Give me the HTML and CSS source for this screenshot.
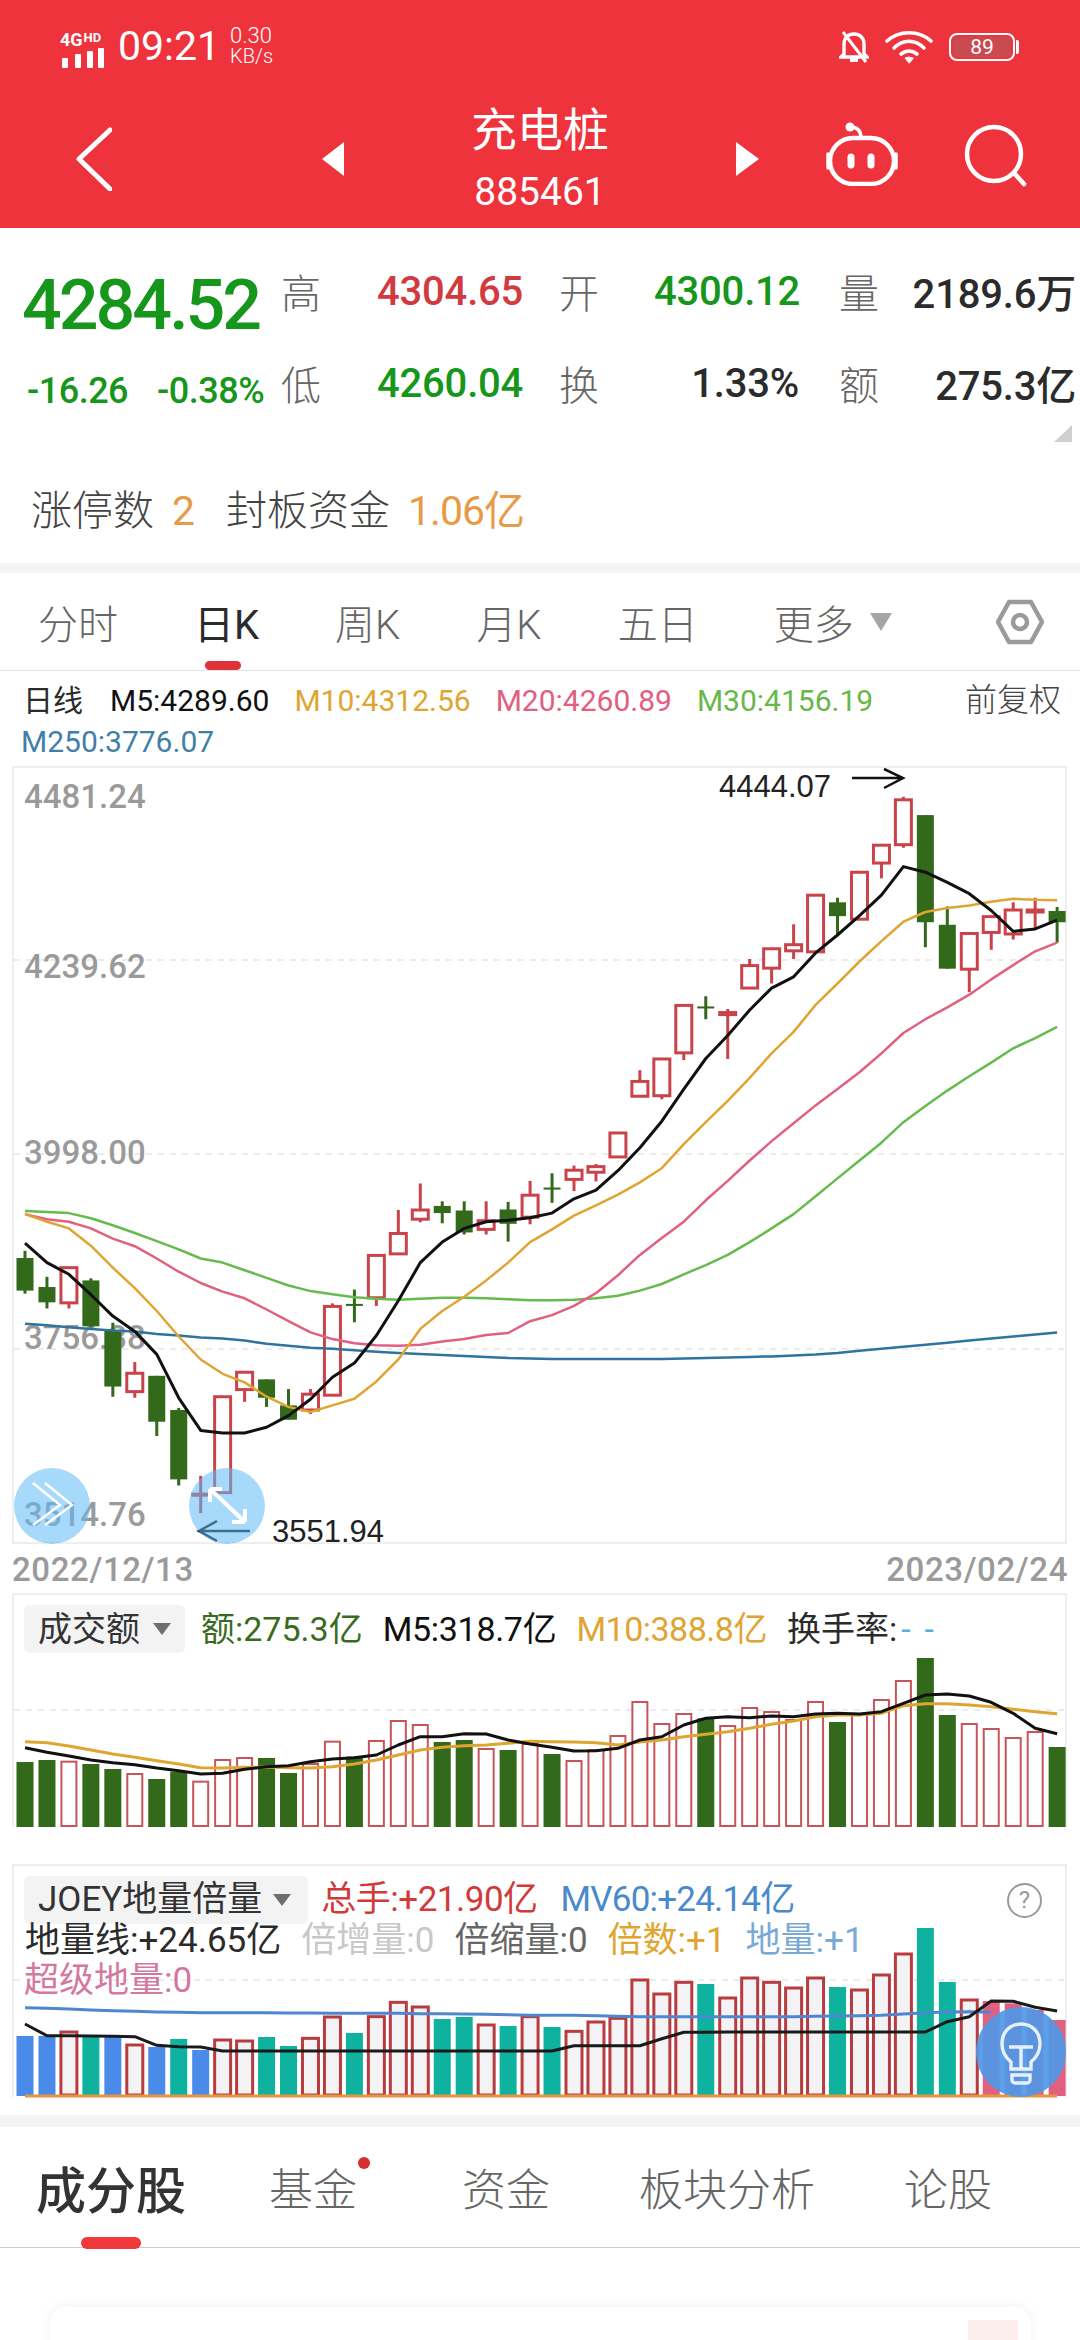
FILE: index.html
```html
<!DOCTYPE html>
<html lang="zh-CN">

<head>
    <meta http-equiv="Content-Type" content="text/html; charset=utf-8" />
    <title>充电桩</title>
    <link rel="stylesheet" href="styles.css">
</head>

<body>
    <header class="top">
        <div class="status">
            <div class="net">
                <div class="net-type">4G<span>HD</span></div>
                <svg class="signal" width="46" height="20" viewBox="0 0 46 20">
                    <rect x="2" y="10" width="6" height="10" rx="1" />
                    <rect x="15" y="6" width="6" height="14" rx="1" />
                    <rect x="27" y="3" width="6" height="17" rx="1" />
                    <rect x="38" y="0" width="6" height="20" rx="1" />
                </svg>
            </div>
            <div class="clock">09:21</div>
            <div class="speed"><span>0.30</span><span class="speed-unit">KB/s</span></div>
            <div class="sys">
                <svg class="bell" width="30" height="34" viewBox="0 0 30 34" fill="none" stroke="#fff" stroke-width="3.4">
                    <path d="M5 24V14C5 8 9 4 15 4s10 4 10 10v10l3 3H2z" />
                    <path d="M11 30h8" stroke-width="4" />
                    <path d="M4 2l23 30" stroke-width="3" />
                </svg>
                <svg class="wifi" width="48" height="34" viewBox="0 0 48 34" fill="none" stroke="#fff" stroke-width="3.6" stroke-linecap="round">
                    <path d="M2 11C14 0 34 0 46 11" />
                    <path d="M9 18C18 9 30 9 39 18" />
                    <path d="M16 24C21 20 27 20 32 24" />
                    <path d="M24 33l-4-5q4-2 8 0z" fill="#fff" stroke-width="1" />
                </svg>
                <div class="battery"><span>89</span></div>
            </div>
        </div>
        <nav class="nav">
            <div class="nav-left">
                <svg width="36" height="64" viewBox="0 0 36 64" fill="none" stroke="#fff" stroke-width="5" stroke-linecap="round" stroke-linejoin="round">
                    <path d="M34 3L3 32l31 30" />
                </svg>
                <span class="tri tri-left"></span>
            </div>
            <div class="nav-title">
                <div class="name">充电桩</div>
                <div class="code">885461</div>
            </div>
            <div class="nav-right">
                <span class="tri tri-right"></span>
                <svg class="robot" width="74" height="64" viewBox="0 0 74 64" fill="none" stroke="#fff" stroke-width="4.5">
                    <circle cx="25" cy="5" r="4.5" fill="#fff" stroke="none" />
                    <path d="M25 5q11 0 11 11" stroke-width="3.5" />
                    <rect x="5" y="16" width="64" height="46" rx="23" />
                    <path d="M3 32v14M71 32v14" stroke-width="3.5" stroke-linecap="round" />
                    <path d="M26 35v8M46 35v8" stroke-width="7" stroke-linecap="round" />
                </svg>
                <svg class="search" width="64" height="64" viewBox="0 0 64 64" fill="none" stroke="#fff" stroke-width="4.5">
                    <circle cx="30" cy="30" r="27" />
                    <path d="M50 49l10 11" stroke-linecap="round" />
                </svg>
            </div>
        </nav>
    </header>

    <section class="quote">
        <div class="quote-grid">
            <div class="price green">4284.52</div>
            <div class="qlabel">高</div>
            <div class="qval red">4304.65</div>
            <div class="qlabel">开</div>
            <div class="qval green">4300.12</div>
            <div class="qlabel">量</div>
            <div class="qval dark end">2189.6万</div>

            <div class="change green"><span>-16.26</span><span>-0.38%</span></div>
            <div class="qlabel">低</div>
            <div class="qval green">4260.04</div>
            <div class="qlabel">换</div>
            <div class="qval dark mid">1.33%</div>
            <div class="qlabel">额</div>
            <div class="qval dark end">275.3亿</div>
        </div>
        <div class="limit">
            <span>涨停数</span><span class="orange">2</span>
            <span class="limit-gap">封板资金</span><span class="orange">1.06亿</span>
        </div>
        <span class="corner"></span>
    </section>

    <div class="band"></div>

    <div class="period">
        <span>分时</span>
        <span class="active">日K</span>
        <span>周K</span>
        <span>月K</span>
        <span>五日</span>
        <span class="more">更多<i class="down"></i></span>
        <svg class="hex" width="48" height="46" viewBox="0 0 48 46" fill="none" stroke="#9a9a9a" stroke-width="4.5">
            <path d="M13 3h22l11 20-11 20H13L2 23z" stroke-linejoin="round" />
            <circle cx="24" cy="23" r="7" />
        </svg>
    </div>

    <div class="ma">
        <div class="ma-row">
            <span class="dark">日线</span>
            <span class="black">M5:4289.60</span>
            <span class="m10">M10:4312.56</span>
            <span class="m20">M20:4260.89</span>
            <span class="m30">M30:4156.19</span>
            <span class="fq">前复权</span>
        </div>
        <div class="ma-row"><span class="m250">M250:3776.07</span></div>
    </div>

    <div class="frame frame-main">
        <svg id="mainChart" class="plot" viewBox="14 768 1051 774"></svg>
        <div class="fab fab-left">
            <svg width="76" height="76" viewBox="0 0 76 76" fill="none" stroke="#fff" stroke-width="2.5">
                <path d="M19 15l27 22-27 20M31 15l27 22-27 20" />
            </svg>
        </div>
        <div class="fab fab-right">
            <svg width="76" height="76" viewBox="0 0 76 76" fill="none" stroke="#fff" stroke-width="4">
                <path d="M21 21L56 54M21 21h12M21 21v13M56 54H43M56 54V41" />
            </svg>
        </div>
    </div>

    <div class="dates"><span>2022/12/13</span><span>2023/02/24</span></div>

    <div class="frame frame-vol">
        <svg id="volChart" class="plot" viewBox="14 1595 1051 232"></svg>
        <div class="legend">
            <span class="tag">成交额<i class="tag-down"></i></span>
            <span class="l-green">额:275.3亿</span>
            <span class="black">M5:318.7亿</span>
            <span class="m10">M10:388.8亿</span>
            <span class="dark">换手率:<b class="dashes">--</b></span>
        </div>
    </div>

    <div class="frame frame-joey">
        <svg id="joeyChart" class="plot" viewBox="14 1866 1051 231"></svg>
        <div class="legend legend-joey">
            <span class="tag tag-wide">JOEY地量倍量<i class="tag-down"></i></span>
            <span class="l-red">总手:+21.90亿</span>
            <span class="l-blue">MV60:+24.14亿</span>
        </div>
        <div class="legend legend-line">
            <span class="dark">地量线:+24.65亿</span>
            <span class="l-muted">倍增量:0</span>
            <span class="l-grey">倍缩量:0</span>
            <span class="m10">倍数:+1</span>
            <span class="l-sky">地量:+1</span>
        </div>
        <div class="legend legend-line"><span class="l-pink">超级地量:0</span></div>
        <div class="help">?</div>
        <div class="fab-bulb">
            <svg width="90" height="90" viewBox="0 0 90 90" fill="none" stroke="#fff" stroke-width="3.4" stroke-opacity=".85">
                <path d="M35 62V55C29 50 26 44 26 37c0-12 8-20 19-20s19 8 19 20c0 7-3 13-9 18v7z" />
                <path d="M33 40h24M45 40v21" />
                <path d="M36 68h18v5a3 3 0 0 1-3 3H39a3 3 0 0 1-3-3z" />
            </svg>
        </div>
    </div>

    <div class="band band-low"></div>

    <div class="subtabs">
        <span class="active">成分股</span>
        <span class="has-dot">基金</span>
        <span>资金</span>
        <span>板块分析</span>
        <span>论股</span>
    </div>

    <div class="card"><span class="card-mark"></span></div>

    <script src="chart.js"></script>
</body>

</html>
```

FILE: styles.css
```css
html,
body {
    width: 1080px;
    height: 2340px;
    margin: 0;
    padding: 0;
    overflow: hidden;
    background-color: #fff;
    font-family: Roboto, "Noto Sans CJK SC", sans-serif;
    color: #333;
}

.top {
    height: 228px;
    background-color: #ee333d;
    color: #fff;
}

.status {
    display: flex;
    align-items: center;
    height: 90px;
    padding: 0 61px 0 60px;
    box-sizing: border-box;
}

.net {
    width: 48px;
    padding-top: 8px;
}

.net-type {
    font-size: 18px;
    font-weight: 700;
    line-height: 15px;
    white-space: nowrap;
}

.net-type span {
    font-size: 13px;
    margin-left: 1px;
    vertical-align: 4px;
}

.signal {
    display: block;
    margin-top: 1px;
    fill: #fff;
}

.clock {
    margin-left: 10px;
    font-size: 41px;
    line-height: 44px;
    padding-top: 2px;
}

.speed {
    display: flex;
    flex-direction: column;
    margin-left: 10px;
    font-size: 22px;
    font-weight: 300;
    line-height: 20px;
    padding-top: 2px;
}

.speed-unit {
    font-size: 20px;
}

.sys {
    display: flex;
    align-items: center;
    gap: 16px;
    margin-left: auto;
    padding-top: 4px;
}

.battery {
    display: flex;
    align-items: center;
    justify-content: center;
    width: 66px;
    height: 28px;
    border: 2px solid #fff;
    border-radius: 8px;
    box-sizing: border-box;
    margin-right: 4px;
    background-color: #c94a4f;
    box-shadow: inset 0 0 0 2px #ee333d;
    font-size: 21px;
    position: relative;
}

.battery::after {
    content: "";
    position: absolute;
    right: -6px;
    top: 5px;
    width: 3px;
    height: 14px;
    background-color: #fff;
    border-radius: 0 2px 2px 0;
}

.nav {
    display: grid;
    grid-template-columns: 344px 392px 344px;
    height: 138px;
}

.nav-left {
    display: flex;
    align-items: center;
    justify-content: space-between;
    padding-left: 76px;
}

.nav-right {
    display: flex;
    align-items: center;
}

.tri {
    display: block;
    width: 0;
    height: 0;
    border-top: 17px solid transparent;
    border-bottom: 17px solid transparent;
}

.tri-left {
    border-right: 22px solid #fff;
}

.tri-right {
    border-left: 23px solid #fff;
}

.robot {
    margin: -10px 0 0 66px;
}

.search {
    margin: -6px 0 0 65px;
}

.nav-title {
    text-align: center;
    padding-top: 10px;
}

.name {
    font-size: 46px;
    line-height: 60px;
}

.code {
    margin-top: 10px;
    font-size: 39px;
    line-height: 44px;
}

.quote {
    position: relative;
    height: 335px;
    box-sizing: border-box;
    padding: 17px 4px 0 25px;
}

.quote-grid {
    display: grid;
    grid-template-columns: 256px 96px 182px 95px 185px 41px 196px;
    grid-auto-rows: 92px;
    align-items: center;
}

.qlabel {
    font-size: 40px;
    color: #666;
    font-weight: 300;
}

.qval {
    font-size: 40px;
    font-weight: 500;
    letter-spacing: -0.2px;
}

.qval.mid {
    text-align: right;
    padding-right: 40px;
}

.qval.end {
    text-align: right;
}

.price {
    margin-left: -3px;
    font-size: 70px;
    font-weight: 500;
    letter-spacing: -3px;
    padding-top: 28px;
}

.change {
    display: flex;
    gap: 29px;
    padding-left: 2px;
    font-size: 36px;
    font-weight: 500;
    letter-spacing: -0.5px;
    padding-top: 16px;
}

.green {
    color: #16961a;
}

.red {
    color: #d13b40;
}

.dark {
    color: #2b2b2b;
}

.orange {
    color: #e89a45;
}

.limit {
    display: flex;
    align-items: center;
    gap: 18px;
    margin-top: 57px;
    padding-left: 6px;
    font-size: 41px;
    font-weight: 300;
    color: #444;
    line-height: 50px;
}

.limit-gap {
    margin-left: 14px;
}

.limit .orange {
    font-weight: 400;
    letter-spacing: -1px;
}

.corner {
    position: absolute;
    right: 8px;
    top: 197px;
    width: 0;
    height: 0;
    border-left: 18px solid transparent;
    border-bottom: 17px solid #cfcfcf;
}

.band {
    height: 10px;
    background-color: #f4f4f4;
}

.band-low {
    height: 12px;
    margin-top: 18px;
}

.period {
    display: flex;
    align-items: center;
    gap: 76px;
    height: 97px;
    padding: 0 0 0 38px;
    border-bottom: 1px solid #e4e4e4;
    position: relative;
    font-size: 40px;
    font-weight: 300;
    color: #666;
}

.period .active {
    color: #2b2b2b;
    font-weight: 400;
    position: relative;
}

.period .active::after {
    content: "";
    position: absolute;
    left: 11px;
    bottom: -19px;
    width: 36px;
    height: 9px;
    border-radius: 5px;
    background-color: #df3238;
}

.more {
    display: flex;
    align-items: center;
    gap: 16px;
}

.down {
    width: 0;
    height: 0;
    border-left: 11px solid transparent;
    border-right: 11px solid transparent;
    border-top: 18px solid #a5a5a5;
}

.hex {
    position: absolute;
    right: 36px;
    top: 26px;
}

.ma {
    height: 95px;
    box-sizing: border-box;
    padding: 9px 19px 0 23px;
    font-size: 30px;
    line-height: 41px;
}

.ma-row {
    display: flex;
    gap: 25px;
}

.ma-row:first-child .black {
    margin-left: 2px;
}

.ma-row:last-child {
    margin-left: -2px;
}

.black {
    color: #111;
}

.m10 {
    color: #dfa532;
}

.m20 {
    color: #e2607f;
}

.m30 {
    color: #67b84a;
}

.m250 {
    color: #3f7fa8;
}

.fq {
    margin-left: auto;
    color: #444;
    font-weight: 300;
    font-size: 32px;
}

.frame {
    position: relative;
    width: 1055px;
    margin-left: 12px;
    box-sizing: border-box;
    border: 2px solid #eeeeee;
}

.frame-main {
    height: 778px;
}

.frame-vol {
    height: 234px;
    border-bottom: 0;
}

.frame-joey {
    height: 233px;
    margin-top: 37px;
    border-bottom: 0;
}

.plot {
    position: absolute;
    left: 0;
    top: 0;
    width: 1051px;
    height: 100%;
    overflow: visible;
}

.axis {
    font-size: 33px;
    font-weight: 500;
    fill: #9a9a9a;
}

.extreme {
    font-family: "Liberation Sans", sans-serif;
    font-size: 31px;
    fill: #222;
}

.fab {
    position: absolute;
    top: 700px;
    width: 76px;
    height: 76px;
    border-radius: 50%;
    background-color: rgba(95, 186, 246, 0.55);
}

.fab-left {
    left: 0;
}

.fab-right {
    left: 175px;
}

.fab svg,
.fab-bulb svg {
    display: block;
}

.dates {
    display: flex;
    justify-content: space-between;
    width: 1056px;
    height: 49px;
    margin-left: 12px;
    font-size: 33px;
    line-height: 51px;
    letter-spacing: 0.6px;
    font-weight: 500;
    color: #9a9a9a;
}

.legend {
    position: relative;
    display: flex;
    align-items: center;
    gap: 20px;
    padding: 10px 0 0 10px;
    font-size: 34px;
    line-height: 48px;
}

.legend .l-green {
    margin-left: -4px;
}

.frame-vol .black {
    letter-spacing: -0.3px;
}

.frame-vol .m10 {
    letter-spacing: -0.5px;
}

.tag {
    display: flex;
    align-items: center;
    gap: 13px;
    padding: 0 14px;
    height: 48px;
    border-radius: 6px;
    background-color: #f3f3f3;
    color: #333;
}

.tag-down {
    width: 0;
    height: 0;
    border-left: 9px solid transparent;
    border-right: 9px solid transparent;
    border-top: 12px solid #6e6e6e;
}

.dashes {
    color: #5ab0dc;
    font-weight: 400;
    letter-spacing: 14px;
    margin-left: 4px;
}

.l-green {
    color: #386b1e;
}

.legend-joey {
    gap: 13px;
    font-size: 35px;
}

.tag-wide {
    gap: 11px;
    padding-right: 17px;
}

.legend-joey .l-red {
    letter-spacing: -0.5px;
}

.legend-joey .l-blue {
    margin-left: 10px;
    letter-spacing: -0.8px;
}

.legend-line {
    padding: 0 0 0 11px;
    gap: 20px;
    font-size: 35px;
    line-height: 40px;
}

.legend-joey + .legend-line {
    margin-top: -3px;
}

.l-red {
    color: #d23a3a;
}

.l-blue {
    color: #4a8acb;
}

.l-muted {
    color: #c8c8c8;
}

.l-grey {
    color: #666;
}

.l-sky {
    color: #7aa9d8;
}

.l-pink {
    color: #d4789f;
    margin-left: -1px;
}

.help {
    position: absolute;
    top: 17px;
    right: 23px;
    width: 31px;
    height: 31px;
    border: 2px solid #9a9a9a;
    border-radius: 50%;
    color: #9a9a9a;
    font-size: 24px;
    line-height: 31px;
    text-align: center;
}

.fab-bulb {
    position: absolute;
    left: 962px;
    top: 141px;
    width: 90px;
    height: 90px;
    border-radius: 50%;
    background-color: rgba(80, 152, 230, 0.92);
}

.subtabs {
    display: flex;
    align-items: center;
    gap: 89px;
    height: 120px;
    padding-left: 36px;
    border-bottom: 1px solid #cccccc;
    font-size: 44px;
    font-weight: 300;
    color: #666;
}

.subtabs span {
    position: relative;
}

.subtabs .active {
    font-size: 50px;
    font-weight: 500;
    color: #333;
}

.subtabs .active::after {
    content: "";
    position: absolute;
    left: 45px;
    bottom: -26px;
    width: 60px;
    height: 12px;
    border-radius: 6px;
    background-color: #f0393a;
}

.subtabs .has-dot {
    margin: 0 16px 0 -6px;
}

.has-dot::after {
    content: "";
    position: absolute;
    right: -13px;
    top: 2px;
    width: 12px;
    height: 12px;
    border-radius: 50%;
    background-color: #d62d30;
}

.card {
    position: relative;
    width: 981px;
    height: 120px;
    margin: 59px 0 0 50px;
    border-radius: 16px;
    box-shadow: 0 0 14px rgba(0, 0, 0, 0.06);
}

.card-mark {
    position: absolute;
    top: 13px;
    right: 13px;
    width: 50px;
    height: 50px;
    background-color: #fdeeee;
}
```

FILE: chart.js
```js
// candle data is [high, bodyTop, bodyBottom, low, up]
const candles = [
    [962, 976, 1040, 1046, 0], [1013, 1033, 1063, 1075, 0], [995, 995, 1064, 1075, 1], [1016, 1020, 1110, 1112, 0],
    [1103, 1118, 1228, 1248, 0], [1180, 1202, 1238, 1250, 1], [1207, 1207, 1297, 1325, 0], [1270, 1274, 1410, 1422, 0],
    [1403, 1439, 1441, 1476, 1], [1248, 1248, 1436, 1436, 1], [1200, 1200, 1234, 1258, 1], [1214, 1214, 1250, 1268, 0],
    [1233, 1265, 1293, 1293, 0], [1233, 1243, 1274, 1282, 1], [1065, 1071, 1245, 1245, 1], [1038, 1066, 1070, 1102, 0],
    [971, 971, 1054, 1070, 1], [882, 928, 968, 968, 1], [830, 882, 900, 906, 1], [865, 874, 888, 908, 0],
    [865, 883, 926, 930, 0], [865, 903, 920, 930, 1], [866, 881, 909, 944, 0], [825, 853, 896, 910, 1],
    [810, 838, 842, 868, 0], [795, 804, 822, 845, 1], [792, 797, 808, 826, 1], [731, 731, 778, 778, 1],
    [608, 630, 659, 659, 1], [586, 586, 658, 665, 1], [481, 481, 574, 588, 1], [463, 483, 487, 508, 0],
    [488, 495, 499, 586, 1], [390, 403, 447, 447, 1], [370, 370, 408, 438, 1], [322, 362, 374, 390, 1],
    [265, 265, 376, 376, 1], [270, 279, 306, 345, 0], [220, 220, 312, 312, 1], [167, 167, 202, 232, 1],
    [72, 78, 166, 172, 1], [108, 108, 318, 367, 0], [287, 323, 409, 409, 0], [340, 340, 410, 455, 1],
    [307, 307, 338, 372, 1], [279, 294, 341, 352, 1], [270, 294, 298, 330, 1], [288, 296, 318, 358, 0]
];

const m5 = [947, 985, 1008, 1048, 1090, 1120, 1165, 1250, 1314, 1319, 1319, 1308, 1285, 1253, 1210, 1182, 1128, 1060, 985, 945, 918, 905, 902, 897,
    888, 860, 843, 805, 760, 708, 645, 585, 540, 490, 447, 425, 378, 343, 305, 265, 209, 220, 240, 262, 295, 336, 331, 314];
const m10 = [890, 905, 918, 952, 995, 1035, 1080, 1130, 1175, 1203, 1220, 1248, 1268, 1278, 1265, 1252, 1218, 1175, 1115, 1080, 1052, 1020, 985, 945,
    920, 893, 873, 852, 828, 800, 753, 710, 668, 623, 575, 533, 480, 438, 395, 355, 317, 298, 290, 285, 278, 272, 274, 275];
const m20 = [890, 900, 905, 918, 938, 953, 977, 1003, 1025, 1042, 1055, 1077, 1100, 1122, 1135, 1143, 1147, 1148, 1146, 1140, 1135, 1127, 1123, 1100,
    1088, 1070, 1045, 1010, 970, 937, 905, 863, 825, 785, 747, 712, 677, 645, 612, 575, 535, 508, 485, 460, 430, 402, 375, 358];
const m30 = [884, 886, 888, 898, 912, 927, 943, 959, 977, 985, 1000, 1015, 1030, 1041, 1047, 1053, 1056, 1058, 1056, 1054, 1054, 1055, 1057, 1059,
    1059, 1058, 1055, 1050, 1040, 1027, 1008, 990, 970, 945, 918, 890, 855, 820, 785, 750, 710, 678, 648, 620, 593, 565, 545, 523];
const m250 = [1105, 1108, 1112, 1115, 1118, 1120, 1125, 1128, 1132, 1134, 1138, 1144, 1148, 1152, 1154, 1157, 1160, 1162, 1164, 1166, 1168, 1170, 1172, 1173,
    1174, 1174, 1174, 1174, 1174, 1174, 1173, 1172, 1171, 1170, 1169, 1167, 1165, 1162, 1158, 1154, 1150, 1146, 1142, 1138, 1134, 1130, 1126, 1122];

// g = down bar, r = up bar
const volBars = [[666, "g"], [660, "g"], [665, "r"], [672, "g"], [687, "g"], [702, "r"], [717, "g"], [695, "g"], [725, "r"], [660, "r"], [654, "r"], [654, "g"],
    [699, "g"], [672, "r"], [605, "r"], [650, "g"], [603, "r"], [543, "r"], [555, "r"], [606, "g"], [600, "g"], [627, "r"], [630, "g"], [612, "r"],
    [642, "g"], [663, "r"], [630, "r"], [588, "r"], [486, "r"], [552, "r"], [522, "r"], [535, "g"], [558, "r"], [504, "r"], [516, "r"], [540, "r"],
    [486, "r"], [546, "g"], [525, "r"], [480, "r"], [423, "r"], [354, "g"], [525, "g"], [552, "r"], [567, "r"], [594, "r"], [576, "r"], [621, "g"]];
const volM5 = [623, 637, 648, 660, 668, 674, 684, 692, 702, 700, 688, 680, 677, 665, 657, 653, 645, 615, 590, 590, 581, 582, 600, 612,
    622, 633, 632, 625, 600, 590, 555, 535, 530, 533, 528, 530, 522, 520, 522, 515, 490, 465, 462, 468, 487, 520, 565, 581];
const volM10 = [605, 608, 618, 630, 642, 652, 662, 672, 683, 684, 682, 681, 683, 684, 680, 672, 660, 645, 630, 622, 617, 615, 610, 604,
    605, 606, 608, 615, 606, 600, 590, 583, 575, 565, 553, 543, 530, 525, 525, 520, 497, 491, 491, 495, 500, 508, 515, 521];

// b = blue, t = teal, r = outlined red, p = pink
const joeyBars = [[588, "b"], [588, "b"], [576, "r"], [588, "t"], [588, "b"], [615, "r"], [621, "b"], [597, "t"], [630, "b"], [600, "r"], [603, "r"], [591, "t"],
    [618, "t"], [595, "r"], [531, "r"], [579, "t"], [530, "r"], [487, "r"], [501, "r"], [537, "t"], [531, "t"], [555, "r"], [558, "t"], [530, "r"],
    [561, "t"], [574, "r"], [546, "r"], [535, "r"], [420, "r"], [462, "r"], [427, "r"], [432, "t"], [474, "r"], [414, "r"], [427, "r"], [444, "r"],
    [414, "r"], [441, "t"], [450, "r"], [405, "r"], [342, "r"], [264, "t"], [426, "t"], [480, "r"], [483, "p"], [490, "p"], [510, "p"], [540, "p"]];
const joeyBlue = [503, 505, 507, 510, 512, 514, 516, 517, 518, 518, 518, 518, 519, 519, 520, 520, 520, 520, 521, 521, 522, 523, 524, 526,
    526, 526, 527, 529, 530, 530, 530, 530, 530, 530, 530, 530, 529, 528, 527, 526, 522, 518, 516, 515, 516];
const joeyBlack = [552, 587, 587, 588, 589, 590, 616, 620, 621, 633, 633, 633, 633, 633, 633, 633, 633, 633, 633, 633, 633, 633, 633, 633,
    633, 617, 617, 617, 617, 596, 577, 577, 576, 576, 576, 576, 576, 576, 576, 576, 576, 576, 545, 530, 483, 484, 502, 513];

const RED = "#c8444a";
const GREEN = "#33691a";

const xAt = i => 25 + i * 21.96;
const mainY = v => 760 + v / 1.96;
const volY = v => 1540 + v / 3;
const joeyY = v => 1840 + v / 3;

function line(values, toY, color, width) {
    const pts = values.map((v, i) => xAt(i).toFixed(1) + "," + toY(v).toFixed(1)).join(" ");
    return `<polyline points="${pts}" fill="none" stroke="${color}" stroke-width="${width}" stroke-linejoin="round" />`;
}

function grid(y) {
    return `<line x1="14" x2="1065" y1="${y}" y2="${y}" stroke="#e6e6e6" stroke-width="1.5" stroke-dasharray="6 6" />`;
}

function candle(c, i) {
    const x = xAt(i);
    const color = c[4] ? RED : GREEN;
    const top = mainY(c[1]);
    const bottom = mainY(c[2]);
    let out = `<line x1="${x}" x2="${x}" y1="${mainY(c[0])}" y2="${mainY(c[3])}" stroke="${color}" stroke-width="3" />`;
    if (c[4]) {
        out += `<rect x="${x - 8}" y="${top}" width="16" height="${bottom - top}" fill="#fff" stroke="${color}" stroke-width="3" />`;
    } else {
        out += `<rect x="${x - 8.5}" y="${top}" width="17" height="${bottom - top}" fill="${color}" />`;
    }
    return out;
}

function volBar(b, i) {
    const x = xAt(i);
    const y = volY(b[0]);
    if (b[1] === "g") {
        return `<rect x="${x - 8.5}" y="${y}" width="17" height="${1827 - y}" fill="${GREEN}" />`;
    }
    return `<rect x="${x - 7.5}" y="${y}" width="15" height="${1826 - y}" fill="#fff" stroke="#c6555a" stroke-width="2" />`;
}

function joeyBar(b, i) {
    const x = xAt(i);
    const y = joeyY(b[0]);
    const fills = { b: "#4a8ae8", t: "#0fb29e", p: "#e2607f" };
    if (b[1] === "r") {
        return `<rect x="${x - 8}" y="${y}" width="16" height="${2095 - y}" fill="#f3f3f5" stroke="#b83c3f" stroke-width="3" />`;
    }
    return `<rect x="${x - 8.5}" y="${y}" width="17" height="${2096 - y}" fill="${fills[b[1]]}" />`;
}

function label(text, x, y) {
    return `<text class="axis" x="${x}" y="${y}">${text}</text>`;
}

document.getElementById("mainChart").innerHTML =
    grid(960) + grid(1154) + grid(1349) +
    label("4481.24", 24, 808) + label("4239.62", 24, 978) + label("3998.00", 24, 1164) +
    label("3756.38", 24, 1349) + label("3514.76", 24, 1526) +
    candles.map(candle).join("") +
    line(m250, mainY, "#2f74a0", 2.5) + line(m30, mainY, "#67bb4e", 2.5) + line(m20, mainY, "#e2607f", 2.5) +
    line(m10, mainY, "#dfa532", 2.5) + line(m5, mainY, "#111", 3) +
    `<text class="extreme" x="719" y="797">4444.07</text>` +
    `<path d="M852 778h51M884 769l19 9-19 10" fill="none" stroke="#111" stroke-width="2.5" />` +
    `<text class="extreme" x="272" y="1542">3551.94</text>` +
    `<path d="M250 1531h-51M217 1521l-18 10 18 10" fill="none" stroke="#111" stroke-width="2.5" />`;

document.getElementById("volChart").innerHTML =
    grid(1710) + volBars.map(volBar).join("") +
    line(volM10, volY, "#dfa532", 3) + line(volM5, volY, "#111", 3);

document.getElementById("joeyChart").innerHTML =
    grid(1980) + joeyBars.map(joeyBar).join("") +
    line(joeyBlue, joeyY, "#4f86cf", 3) + line(joeyBlack, joeyY, "#1a1a1a", 3) +
    `<line x1="25" x2="1057" y1="2096" y2="2096" stroke="#e8963c" stroke-width="3" />`;
```
